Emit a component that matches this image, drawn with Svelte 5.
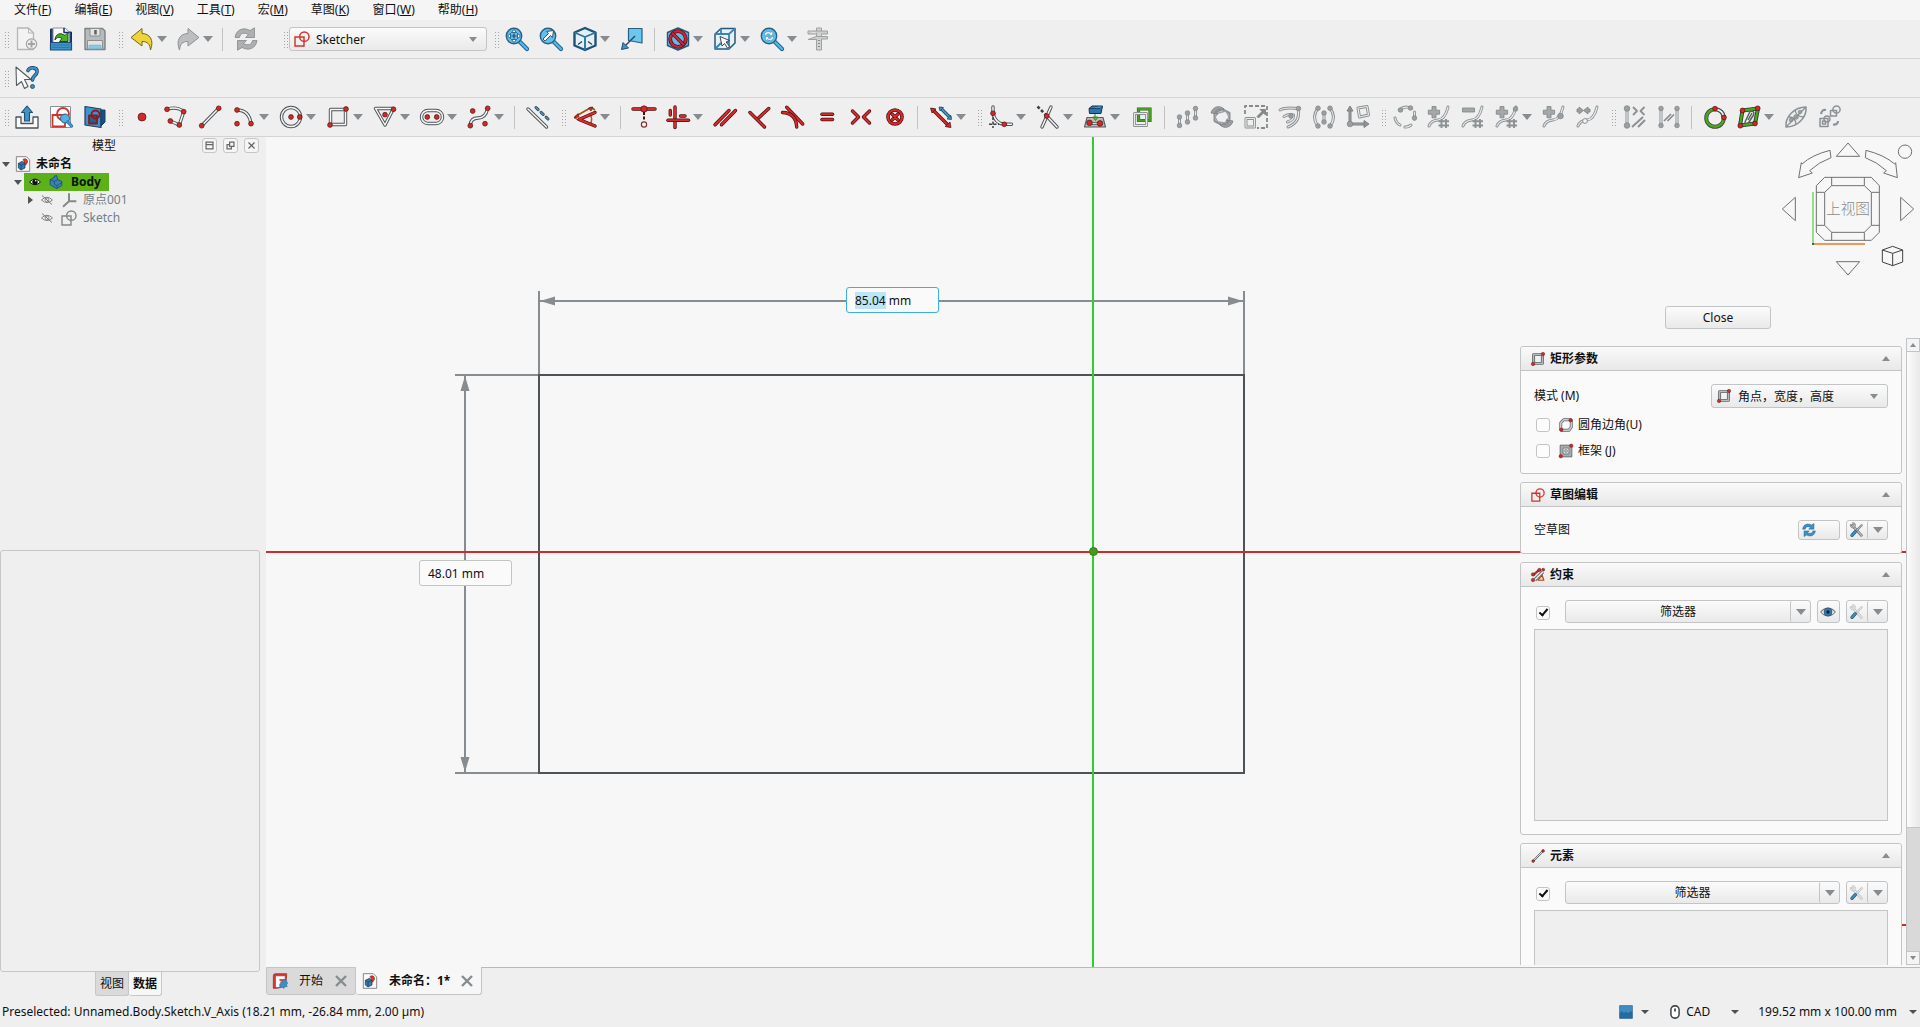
<script>
  const RED = '#cf2a2a';
  const dot = (x, y, r = 2.4) => `<circle cx="${x}" cy="${y}" r="${r}" fill="${RED}" stroke="#5a1010" stroke-width=".7"/>`;
  const gdot = (x, y, r = 2.3) => `<circle cx="${x}" cy="${y}" r="${r}" fill="#9a9fa2" stroke="#7d8386" stroke-width=".7"/>`;
  const line = (d, outer, ow, inner, iw, extra = '') =>
    `<path d="${d}" fill="none" stroke="${outer}" stroke-width="${ow}" stroke-linejoin="round" stroke-linecap="round" ${extra}/><path d="${d}" fill="none" stroke="${inner}" stroke-width="${iw}" stroke-linejoin="round" stroke-linecap="round" ${extra}/>`;
  const w = (d) => line(d, '#4b5358', 3.4, '#f6f6f6', 1.5);
  const g = (d) => line(d, '#8b9194', 3, '#e9e9e9', 1.2);
  const r = (d) => line(d, '#4a0c10', 3.4, '#d62b2b', 2);
  const thin = (d, c = '#4b5358', sw = 1.2, fill = 'none', extra = '') =>
    `<path d="${d}" fill="${fill}" stroke="${c}" stroke-width="${sw}" stroke-linejoin="round" ${extra}/>`;
  const lens = line('M14.5 14.5L22 22', '#1d5f8c', 4.2, '#54b8ec', 2.4) +
    `<circle cx="9" cy="9" r="7.7" fill="#5fc0ef" stroke="#2b5f80" stroke-width="1.4"/>`;
  const plus = thin('M5 1.5h4v3.700h3.600v4h-3.600v3.600h-4v-3.600h-3.700v-4h3.700z', '#7d8386', 0.8, '#a3a8aa');
  const hash = thin('M14.500 14v9M19 14v9M11.500 16.200h10.500M11.500 20.500h10.500', '#8b9194', 1.9);
  const curve = g('M2 21Q4 15.500 11 15T21 2');
  const refresh = (c, s) =>
    thin('M1 10.500C2 3 9 -.5 16 3.500L20.500 .8V10.500H11.500L14.500 7.500C10 5 6 6.500 5.500 10.500z', s, 0.8, c) +
    thin('M23 13.500C22 21 15 24.500 8 20.500L3.500 23.200V13.500H12.500L9.500 16.500C14 19 18 17.500 18.500 13.500z', s, 0.8, c);
  const sketch = (c, f = 'none') =>
    `<path d="M1.500 9h13.500v13.500h-13.500z" fill="${f}" stroke="${c}" stroke-width="2.200"/><circle cx="15.500" cy="8.500" r="7" fill="none" stroke="${c}" stroke-width="2.200"/>`;
  const tools = (a, b) =>
    line('M5 5L18.500 20', a, 4.2, b, 2.2) + line('M19 5L11 13', a, 3.2, b, 1.6) +
    thin('M2 3.500L5 6.500L7.500 4L5 1C9 .5 11 4 9 7L6.500 9C3 9 1 7 2 3.500z', a, 0.9, b) +
    line('M9.500 14.500L4.500 20', '#235c85', 5, '#3d8cc2', 3);

  const I = {
    new: thin('M2.500 1H13.500L18.500 6V22.500H2.500z', '#b4b6b7', 1.3, '#f3f3f3') + thin('M13.500 1V6H18.500', '#b4b6b7', 1) +
      `<circle cx="16.500" cy="17" r="5.200" fill="#eee" stroke="#a2a5a6" stroke-width="1.200"/>` + thin('M16.500 13.500V20.500M13 17H20', '#a2a5a6', 2),
    open: thin('M1.500 2H4V15H1.500zM20 5H22.500V15H20z', '#152c66', 1, '#20407c') + thin('M4 1H16L20.500 5V16H4z', '#8b9194', 1, '#fafafa') + thin('M15 1V5.500H20.500', '#152c66', 1.5) +
      thin('M6 13C6.500 7 11 5 16 8.500L19 5.500V14.500H10.500L13 11.500C10 9.500 8 10 6 13z', '#14501a', 1, '#4bb31e') +
      thin('M1.500 15.500H22.500V23H1.500z', '#1d4d74', 1.2, '#3f92c9') + thin('M3 18H21M3 20.500H21', '#2c75a6', 0.9),
    save: thin('M2 1.500H19.500L22 4V22.500H2z', '#7c8284', 1.4, '#b8bbbc') + thin('M7 1.500H17V9H7z', '#8a8f91', 1, '#e4e4e4') +
      thin('M12.500 3V7.500', '#5d6365', 2.5) + thin('M4.500 13.500H19.500V22H4.500z', '#8a8f91', 1, '#e4e4e4') + thin('M6 18.200H18V21.500H6z', '#85b7d6', 1, '#8fc5e4'),
    undo: thin('M1 10.500L12 1.500V6.500C19.500 6.500 24.500 13 20.500 23C20 17 17.500 14.500 12 14.500V19z', '#7a6410', 1, '#edd43a'),
    redo: thin('M23 10.500L12 1.500V6.500C4.500 6.500 -.5 13 3.500 23C4 17 6.500 14.500 12 14.500V19z', '#8c9193', 1, '#bcbfc0'),
    refresh: refresh('#adb0b1', '#85898b'),
    refreshBlue: refresh('#3f90c4', '#265a80'),
    sketcher: sketch('#d2342c'),
    sketchGrey: sketch('#84898b'),
    fit: lens + thin('M9 2.500L11.500 5.500H6.500zM9 15.500L11.500 12.500H6.500zM2.500 9L5.500 6.500V11.500zM15.500 9L12.500 6.500V11.500z', '#1e4a68', 0.8, '#fff') + thin('M9 6.500v5M6.500 9h5', '#1e4a68', 1.2),
    fitSel: lens + thin('M4 12L9.500 6.500L7.500 4.500L14.500 3.500L13.500 10.500L11.500 8.500L6 14z', '#33464f', 0.9, '#fff'),
    cube: thin('M12 1L22.500 5.500V18.500L12 23L1.500 18.500V5.500z', '#1f5278', 2.4, '#e6f1f7') + thin('M1.500 5.500L12 10L22.500 5.500M12 10V23', '#2f76a5', 1.9) + thin('M5 17.500L9 14.500M19 17.500L15 14.500', '#2f4a5c', 1.5),
    plane: thin('M8.500 1.500H22V16L8.500 13.500z', '#2c5d7d', 1.2, '#6bc6f0') + thin('M15 9L5 19', '#1f4a6c', 1.5) + thin('M1.500 22.500L3 15.500L8.500 21z', '#1d4f76', 1, '#3e91c8'),
    clip: thin('M12 1L22.500 5.500V18.500L12 23L1.500 18.500V5.500z', '#24587d', 1.4, '#5bbdee') + `<circle cx="12" cy="12" r="7.800" fill="none" stroke="#5a1016" stroke-width="3.800"/><circle cx="12" cy="12" r="7.800" fill="none" stroke="#cf2434" stroke-width="2.200"/>` + line('M6.500 6.500L17.500 17.500', '#5a1016', 3.600, '#cf2434', 2.2),
    selcube: thin('M2 7L8 1.500H22V16L16 22H2z', '#285878', 1.5, '#e4f1f8') + thin('M2 7H16L22 1.500M16 7V22M8 1.500V7M8 15.500H16M2 22L8 16', '#3784b5', 1.8) + thin('M7 9.500L16.500 13.500L13 15L16.500 19.500L14.500 21L11.500 16.500L9 19z', '#333', 0.9, '#fff'),
    zoomsync: lens + `<g transform="translate(4 4) scale(.42)">${refresh('#fff', '#1e5075')}</g>`,
    caliper: thin('M9.500 1H14.500V23H9.500z', '#9da0a1', 1, '#d4d4d4') + thin('M1 4H20.500V7H14.500M1 4V7H9.500M1 12.500L9.500 9.500H14.500L20.500 9.500V12H14.500M1 12.500H9.500', '#9da0a1', 1, '#cdcdcd') + thin('M12 13v1M12 16v1M12 19v1', '#888', 2),
    help: thin('M1 1L16 13.500H9.500L13 20.500L9.500 22.500L6.500 15.500L1.500 19.500z', '#555b5e', 1.1, '#fbfbfb') + line('M13 4.500C15 .5 22.500 1 22 6C21.500 10 17.500 9.500 17.500 14', '#203c58', 3.6, '#3c8fc9', 2.2) + `<circle cx="17.500" cy="20.500" r="2" fill="#3c8fc9" stroke="#203c58" stroke-width=".8"/>`,
    leave: thin('M1 12H6V18.500H18V12H23V23H1z', '#4b5358', 1.3, '#fafafa') + thin('M12 1L17.500 7.500H14.500V16H9.500V7.500H6.500z', '#1f4f73', 1.1, '#4391c5'),
    view: thin('M1.500 1.500H21.500V22.500H1.500z', '#8b9194', 1, '#fff') + `<path d="M3.500 10H16V21.500H3.500z" fill="none" stroke="#d2342c" stroke-width="1.800"/><circle cx="14" cy="9" r="6" fill="none" stroke="#d2342c" stroke-width="1.800"/><circle cx="16" cy="13.500" r="4.500" fill="#4fb3e6" stroke="#245f88"/>` + line('M19 17L22.500 21', '#1d5f8c', 3.2, '#3e9bd2', 2),
    section: thin('M2 1.500L18 4V22.500L2 20z', '#17405f', 1.2, '#3f93c9') + thin('M18 5H22V17L18 21z', '#17405f', 1, '#1c4f86') + thin('M6 10.500H14V18.500H6z', '#8a1a20', 1.8, '#2a5f8c') + `<circle cx="12.500" cy="9.500" r="4" fill="none" stroke="#8a1a20" stroke-width="1.800"/>`,
    point: dot(12, 12, 4),
    polyline: w('M3 4.300Q13 1 19.700 6.700L15.300 20L6.300 16') + dot(3, 4.3) + dot(19.7, 6.7) + dot(15.3, 20) + dot(6.3, 16),
    line: w('M3.700 20.700L20.700 3.300') + dot(3.7, 20.7) + dot(20.7, 3.3),
    arc: w('M5 5Q17 5 19 18.700') + dot(5, 5) + dot(19, 18.7) + dot(5, 18.7),
    circle: w('M2.500 12a9.500 9.500 0 1 0 19 0a9.500 9.500 0 1 0 -19 0') + dot(12, 12) + dot(20.7, 12),
    rect: w('M4.500 4.500H19.500V19.500H4.500z') + dot(4, 20) + dot(20, 4),
    rectSmall: line('M4.500 4.500H19.500V19.500H4.500z', '#5d6568', 5, '#b9bec0', 2) + dot(3.5, 20.5, 3) + dot(20.5, 3.5, 3),
    rectRound: line('M8 3H19.500Q21 3 21 5V16L17 21H5Q3 21 3 19V8z', '#5d6568', 5, '#c9cccd', 2.6) + dot(4, 20, 3) + dot(20, 4, 3),
    rectFrame: thin('M2 2H22V22H2z', '#5d6568', 1.5, '#a9adaf') + thin('M7 7H17V17H7z', '#5d6568', 1.3, '#f2f2f2') + thin('M10 10H14V14H10z', '#5d6568', 1.3) + dot(3, 21, 3) + dot(21, 3, 3),
    polygon: w('M2.500 3.500H20.500L12 20z') + dot(20.5, 4.3) + dot(12, 9.7),
    slot: w('M8 5.500H16A6.500 6.500 0 0 1 16 18.500H8A6.500 6.500 0 0 1 8 5.500z') + dot(7.3, 12) + dot(16.7, 12),
    bspline: w('M3.300 20.700Q3.500 13 11 13T20.700 3.300') + dot(5.7, 6) + dot(20.7, 3.3) + dot(3.3, 20.7) + dot(18, 18.7),
    construct: w('M2 4L20.500 22') + line('M10 2.500L22 14', '#39464e', 3, '#4d8cb5', 1.6, 'stroke-dasharray="3 4"'),
    angle: thin('M1.500 12L18 2.500L22 5', '#a8500c', 1.6) + thin('M1.500 12.500L5 15M17 9Q20 14 17.500 19', '#c4521b', 1.5) + r('M22 7.500L6 14.500L22 21') + thin('M1 13L5 8.500L6 12zM20 2L15.500 3L18 6z', '#5a1010', 0.6, RED),
    coincident: r('M1 4H23') + dot(12, 4, 3.2) + thin('M12 7V16', '#4a1010', 2, 'none', 'stroke-dasharray="3 1.500"') + `<circle cx="12" cy="19.500" r="2.600" fill="#fff" stroke="#8a2a2a" stroke-width="1.200"/>`,
    horver: r('M9 2V22.500') + r('M2 15.300H22.500') + r('M4.300 5.500V10') + r('M14.500 11H19'),
    parallel: r('M2 19.700L16 5.500') + r('M8.500 19.700L22.500 5.500'),
    perp: r('M21.700 3.500L10.500 14') + r('M3 7.500L17.500 22'),
    tangent: r('M5.700 2.300L21.700 19') + r('M1.500 7.500Q15 8 15.700 22'),
    equal: r('M7 9.300H17.500') + r('M7 14.500H17.500'),
    symm: r('M3.500 6L9.500 12L3.500 18') + r('M20.500 6L14.500 12L20.500 18'),
    block: `<circle cx="12" cy="12" r="7" fill="none" stroke="#4a0c10" stroke-width="3.600"/><circle cx="12" cy="12" r="7" fill="none" stroke="#d62b2b" stroke-width="2.200"/>` + r('M9 9L15 15M15 9L9 15'),
    toggle: r('M4 5L19.500 20.500') + thin('M1.500 3L7 4L3 8zM22 22.500L16 21.500L21 17z', '#4a0c10', 0.7, RED) + line('M12 3.500L21 12.500', '#1f3f58', 3.2, '#4593c2', 1.8) + thin('M10 2L14.500 2.500L11 6zM22.500 14.500L18 14L21.500 10z', '#1f3f58', 0.7, '#4593c2'),
    fillet: w('M4 2V8.300Q6 18 15.300 19.300H22.500') + thin('M4 12V23M0 19.300H10', '#3b4246', 1.5, 'none', 'stroke-dasharray="3 1.500"') + dot(4, 8.3) + dot(15.3, 19.3),
    trim: w('M15 2L6 22') + w('M10.700 11L21 22') + thin('M1.500 1.500L10 10', '#3b4246', 2.6, 'none', 'stroke-dasharray="3 2"') + dot(10.7, 11),
    external: thin('M4 12.500H20L22.500 22H1.500z', '#555b5e', 1.1, '#b9bcbd') + thin('M6 3.500L9 1H19.500L18 8.500H6.500z', '#12324e', 1, '#2d74ac') + thin('M6 3.500H17L19.500 1', '#12324e', 0.8, '#4e9bd0') + thin('M12 9V13M10 12H15L12.500 15.500z', '#2f8a1c', 1, '#54c030') + line('M6.500 18.500H17', '#555', 2.5, '#ddd', 1) + dot(6.5, 17.8, 2.8) + dot(17, 18.4, 2.8),
    carbon: `<path d="M8.500 4H20V15.500H8.500z" fill="none" stroke="#2c6c14" stroke-width="3.200"/><path d="M8.500 4H20V15.500H8.500z" fill="none" stroke="#459f22" stroke-width="2"/>` + g('M4.500 8.500H16.500V20.500H4.500z'),
    g1: g('M3.500 12V20.500') + g('M11.500 8V17') + g('M19.500 3V13') + gdot(3.5, 12) + gdot(3.5, 20.5) + gdot(11.5, 8) + gdot(11.5, 17) + gdot(19.5, 3.5) + gdot(19.5, 13),
    g2: thin('M12 4L19.500 8V16L12 20L4.500 16V8z', '#8b9194', 2) + thin('M8 8L16 6L19 12L15 18L8 17L5 12z', '#9ca1a3', 1.3) + thin('M1 8C3 1 10 0 14 4L11 5C8 3.500 6 5 5.500 7.500L8 9zM23 16C21 23 14 24 10 20L13 19C16 20.500 18 19 18.500 16.500L16 15z', '#777d80', 0.8, '#9a9fa2'),
    g3: thin('M1 9V1H23V23H13', '#84898c', 1.8, 'none', 'stroke-dasharray="4 2"') + g('M2 13.500H10.500V22H2z') + thin('M13 11.500L18 6.500L16 4.500H21.500V10L19.500 8L14.500 13z', '#6f7578', 0.7, '#84898c'),
    g4: g('M2 5Q7 2 20 3.500Q23 17 10 22') + g('M6 11.500Q11 8.500 15.500 10Q16 15 9.500 17') + gdot(20.5, 3.5) + gdot(13, 11),
    g5: g('M6 3Q-1 12 6 21.500') + g('M18 3Q25 12 18 21.500') + g('M12 7.500V16.500') + gdot(6, 3.2) + gdot(6, 21) + gdot(18, 3.2) + gdot(18, 21) + gdot(12, 8) + gdot(12, 17),
    g6: line('M4 5V19H19', '#7d8386', 3, '#8f9597', 1.8) + thin('M4 1L7 6H1zM23 19L18 22.500V15.500z', '#7d8386', 1, '#8f9597') + gdot(4, 19, 2.8) + g('M12 3L21 1.500L22.500 10L13.500 12z'),
    g7: g('M6.500 5Q12 0 18 3.500') + g('M21.500 7V14') + g('M18 20Q15 22.500 12 22') + g('M7 20Q3 18 2 13') + gdot(7.500, 5) + gdot(17.5, 3) + gdot(21.500, 13),
    g8: curve + hash + plus,
    g9: curve + hash + thin('M1.500 3H13.500V7H1.500z', '#7d8386', 0.8, '#a3a8aa'),
    g10: curve + hash + plus + gdot(20.500, 4),
    g11: curve + plus + gdot(18.5, 11, 2.8),
    g12: curve + thin('M1 4H3V2L7.500 5.500L3 9V7H1zM14 4H12V2L7.500 5.500L12 9V7H14z', '#7d8386', 0.8, '#9a9fa2') + `<circle cx="9" cy="16" r="2.400" fill="#f5f5f5" stroke="#8b9194"/>`,
    g13: g('M4 4V20') + gdot(4, 3.500, 2.800) + gdot(4, 20.500, 2.8) + thin('M10 2L14 6L10 10M21.500 2L17.500 6L21.500 10', '#8b9194', 1.8) + thin('M9 22L20 12M15 22L22 15', '#8b9194', 2),
    g14: g('M4 4V20') + g('M20 4V20') + gdot(4, 3.5) + gdot(4, 20.5) + gdot(20, 3.5) + gdot(20, 20.5) + thin('M7 16L14 9M10.500 16L17 9.500', '#84898c', 1.6),
    closed: `<circle cx="12" cy="13" r="8.800" fill="none" stroke="#3e4a42" stroke-width="4"/><circle cx="12" cy="13" r="8.800" fill="none" stroke="#4aa81f" stroke-width="2.400"/>` + w('M13 4.200Q20 5.500 20.800 12') + dot(12, 3.7) + dot(21, 12.5),
    validate: line('M5.500 5.500L21 3.500L18 18.500L3 20.500z', '#2a3a2a', 4, '#4aa81f', 2.3, '') + thin('M8 17L13 6.500Q18 5 16.500 10L12 17Q8 20 8 17M11 15L15 8', '#5a6062', 1.5, '#f2f2f2') + dot(5.5, 5.5) + dot(20.7, 3.3) + dot(18, 18.5) + dot(3.3, 20.7),
    g15: thin('M2 22C1 12 10 2 22 2C23 12 14 22 2 22z', '#8b9194', 1.5, '#ececec') + thin('M2 22L22 2M5 12Q12 12 12 20M11 5Q12 12 20 12', '#8b9194', 1.3) + gdot(12, 12) + gdot(7, 15, 1.800) + gdot(16, 7, 1.800),
    g16: thin('M12.500 5.500H18.500V11H12.500zM2 13.500H10V21.500H2zM4.500 16H7.500V19H4.500z', '#8b9194', 1.5) + `<circle cx="18.500" cy="4.500" r="3.600" fill="none" stroke="#8b9194" stroke-width="1.500"/><circle cx="9" cy="14" r="3" fill="none" stroke="#8b9194" stroke-width="1.300"/>` + thin('M3 9Q4 4 8 5M20 16Q20 20 15 19.500', '#8b9194', 2.2),
    doc: thin('M2 1H17L22 6V23H2z', '#777', 1.3, '#fafafa') + thin('M5 11L11 8L15 11V18L9 21L5 18z', '#12324e', 1, '#3679ad') + thin('M12 5Q18 2 19 9L16 14L14 9z', '#7a1414', 0.8, '#d93a2b') + thin('M5 11L9 13.500L15 11M9 13.500V21', '#12324e', 0.9),
    body: thin('M2 8L8 5L9 2L13 1L15 8L22 11V18L13 23L2 17z', '#17466b', 1.4, '#3a83b9') + thin('M2 8L9 11L15 8M9 11V16L14 18L22 13M14 18V23', '#17466b', 1.2),
    origin: thin('M12 2V14L3 22M12 14H23', '#84898b', 3),
    eye: thin('M1 12Q12 0 23 12Q12 23 1 12z', '#111', 2, '#fff') + `<circle cx="12" cy="12" r="5.500" fill="#111"/><circle cx="13.500" cy="9.500" r="1.600" fill="#fff"/>`,
    eyeOff: thin('M1 12Q12 1 23 12Q12 22 1 12z', '#777', 1.8, '#f4f4f4') + `<circle cx="12" cy="12" r="4" fill="none" stroke="#777" stroke-width="1.600"/>` + thin('M2 3L22 21', '#777', 2),
    eyeBlue: thin('M1 12Q12 0 23 12Q12 24 1 12z', '#6d7375', 1.6, '#eef3f6') + `<circle cx="12" cy="12" r="6" fill="#2f7fb5" stroke="#1f4f73"/><circle cx="12" cy="12" r="2.500" fill="#101820"/>`,
    tools: tools('#6b7073', '#b4b8b9'),
    toolsOff: tools('#b9bcbd', '#e4e4e4'),
    constraints: r('M4 12L14 3') + dot(14.500, 3.500, 3) + dot(3.500, 20.500, 3) + dot(21, 3, 2.500) + dot(3.500, 11, 3) + thin('M4 20L20 4M8 22L22 8', '#6b7073', 2) + thin('M12 21H22L19 12z', '#b5471a', 2, '#e9d9b0'),
    logo: thin('M2 23V4Q2 1 5 1H22V4L20 20L8 23z', '#9d1f1f', 1, '#d8352e') + thin('M6 21V5H19V9H11V12H15V16H11V21z', '#d9e1e6', 0.6, '#fff') + thin('M13 13L16 12L17 9.500L19.500 11L22 10V13L24 15L22 17.500L23 20.500L20 20.500L17.500 23.500L16 21L12 22V18z', '#2c6c9b', 0.6, '#3f8cc4'),
    nav: thin('M1 1H23V23H1z', '#1f5279', 1, '#3f8cc0') + thin('M2 14L5 11L8 15L12 12L16 15L20 11L22 13V22H2z', '#1f5f96', 1, '#256aa3'),
    mouse: `<rect x="5" y="1.500" width="14" height="21" rx="6.500" fill="#fff" stroke="#3f4649" stroke-width="2.600"/>` + thin('M12 6V11', '#3f4649', 3)
  };

  const b = (icon, label) => ({ icon, label });
  const m = (icon, label) => ({ icon, label, menu: true });
  const H = { handle: true };
  const S = { sep: true };

  const fileBar = [H, b('new', '新建'), b('open', '打开'), b('save', '保存'), H, m('undo', '撤销'), m('redo', '重做'), S, b('refresh', '刷新')];
  const viewBar = [H, b('fit', '显示全部'), b('fitSel', '显示选中'), m('cube', '等轴测'), b('plane', '对齐视图'), S, m('clip', '剖切'), m('selcube', '选择'), m('zoomsync', '同步视图'), b('caliper', '测量')];
  const sketchBar = [
    H, b('leave', '离开草图'), b('view', '查看草图'), b('section', '查看剖面'), H,
    b('point', '点'), b('polyline', '折线'), b('line', '直线'), m('arc', '圆弧'), m('circle', '圆'), m('rect', '矩形'), m('polygon', '多边形'), m('slot', '槽'), m('bspline', 'B样条'), S, b('construct', '构造几何'), H,
    m('angle', '尺寸约束'), S, b('coincident', '重合'), m('horver', '水平/垂直'), b('parallel', '平行'), b('perp', '垂直'), b('tangent', '相切'), b('equal', '相等'), b('symm', '对称'), b('block', '锁定'), S, m('toggle', '切换约束'), H,
    m('fillet', '圆角'), m('trim', '修剪'), m('external', '外部几何'), b('carbon', '复写'), S, b('g1', '移动'), b('g2', '旋转'), b('g3', '缩放'), b('g4', '偏移'), b('g5', '镜像'), b('g6', '移除对齐'), H,
    b('g7', '转换B样条'), b('g8', '升阶'), b('g9', '降阶'), m('g10', '重数'), b('g11', '插入节点'), b('g12', '连接曲线'), H,
    b('g13', '选择约束'), b('g14', '选择元素'), S, b('closed', '显示轮廓'), m('validate', '验证'), b('g15', '对称几何'), b('g16', '切换空间')
  ];
  const menus = [['文件', 'F'], ['编辑', 'E'], ['视图', 'V'], ['工具', 'T'], ['宏', 'M'], ['草图', 'K'], ['窗口', 'W'], ['帮助', 'H']];
</script>

{#snippet icon(name, cls = '')}
  <svg class="ico {cls}" viewBox="0 0 24 24" aria-hidden="true">{@html I[name]}</svg>
{/snippet}

{#snippet bar(items)}
  {#each items as it}
    {#if it.handle}
      <span class="handle"></span>
    {:else if it.sep}
      <span class="sep"></span>
    {:else}
      <button class="tool" class:menu={it.menu} aria-label={it.label}>
        {@render icon(it.icon)}
        {#if it.menu}<span class="tri"></span>{/if}
      </button>
    {/if}
  {/each}
{/snippet}

{#snippet head(name, title)}
  <header class="phead">
    {@render icon(name, 'i14')}
    <h2>{title}</h2>
    <button class="fold" aria-label="折叠"></button>
  </header>
{/snippet}

{#snippet split(name)}
  <div class="split">
    <button aria-label="设置">{@render icon(name, 'i16')}</button>
    <button class="drop" aria-label="更多"><span class="tri"></span></button>
  </div>
{/snippet}

<div class="app">
  <nav class="menubar">
    {#each menus as [name, key]}
      <button>{name}(<u>{key}</u>)</button>
    {/each}
  </nav>

  <div class="toolbar">
    <div class="group file">{@render bar(fileBar)}</div>
    <div class="group"><span class="handle"></span>
      <label class="workbench">
        {@render icon('sketcher', 'i16')}
        <select aria-label="工作台"><option>Sketcher</option></select>
        <span class="tri small"></span>
      </label>
    </div>
    <div class="group viewgroup">{@render bar(viewBar)}</div>
  </div>
  <div class="toolbar">
    <div class="group">{@render bar([H, b('help', '这是什么')])}</div>
  </div>
  <div class="toolbar">
    <div class="group">{@render bar(sketchBar)}</div>
  </div>

  <main>
    <aside>
      <header class="docktitle">
        <h1>模型</h1>
        <button aria-label="最小化"><svg viewBox="0 0 15 15"><path d="M3.500 3.500h8v8h-8zM3.500 6.500h8" /></svg></button>
        <button aria-label="浮动"><svg viewBox="0 0 15 15"><path d="M6.500 3.500h5v5h-5zM6.500 6.500h-3v5h5v-3" /></svg></button>
        <button aria-label="关闭"><svg viewBox="0 0 15 15"><path d="M4 4l7 7M11 4l-7 7" /></svg></button>
      </header>
      <ul class="tree">
        <li class="l0"><span class="exp"></span>{@render icon('doc', 'i16')}<b>未命名</b></li>
        <li class="l1"><span class="exp"></span><span class="hit">{@render icon('eye', 'i12')}{@render icon('body', 'i14')}<b>Body</b></span></li>
        <li class="l2 dim"><span class="exp shut"></span>{@render icon('eyeOff', 'i12')}{@render icon('origin', 'i16')}<span>原点001</span></li>
        <li class="l2 dim"><span class="exp none"></span>{@render icon('eyeOff', 'i12')}{@render icon('sketchGrey', 'i16')}<span>Sketch</span></li>
      </ul>
      <div class="props"></div>
      <div class="sidetabs">
        <button>视图</button>
        <button class="on">数据</button>
      </div>
    </aside>

    <section class="work">
      <div class="view">
        <svg class="canvas" aria-hidden="true">
          <path class="dim" d="M273 154V237M978 154V237M274 164H977M189 238H273M189 636H273M199 239V635" />
          <path class="tip" d="M274 164l15 -4.500v9zM977 164l-15 -4.500v9zM199 239l-4.500 15h9zM199 635l-4.500 -15h9z" />
          <path class="shape" d="M273 238H978V636H273z" />
          <line class="xaxis" x1="0" y1="415" x2="100%" y2="415" />
          <line class="xaxis" x1="98%" y1="788" x2="100%" y2="788" />
          <line class="yaxis" x1="827" y1="0" x2="827" y2="100%" />
          <circle cx="827.500" cy="414.500" r="4" />
        </svg>
        <label class="dimfield width focus">
          <span class="value"><mark>85.04</mark> mm</span>
          <input aria-label="宽度" />
        </label>
        <label class="dimfield height">
          <span class="value">48.01 mm</span>
          <input aria-label="高度" />
        </label>

        <svg class="navcube" viewBox="840 21 420 420" aria-hidden="true">
          <path d="M1044 39l35 40h-70zM1044 435l35 -40h-70zM847 237l39 -35v70zM1241 237l-39 -35v70z" />
          <path d="M990 61Q935 75 906 102L904 98L896 143L937 129L929 122Q955 97 993 83zM1098 61Q1153 75 1184 102L1187 98L1192 143L1151 129L1159 122Q1133 97 1096 83z" />
          <circle cx="1215" cy="65" r="20" />
          <path d="M974 142H1114L1138 167V307L1114 331H974L949 307V167zM995 142V167H1093V142M995 331V307H1093V331M949 187H974V286H949M1138 187H1114V286H1138M995 167L974 187M1093 167L1114 187M974 286L995 307M1114 286L1093 307" />
          <path class="cubelet" d="M1147 360L1178 349L1208 360V396L1178 407L1147 396zM1147 360L1178 370L1208 360M1178 370V407" />
          <path class="ay" d="M939 186V341" />
          <path class="ax" d="M939 342H1095" />
          <path class="az" d="M936 342H942" />
          <text x="1044" y="253" text-anchor="middle">上视图</text>
        </svg>

        <div class="task">
          <div class="closerow"><button class="btn close">Close</button></div>
          <div class="scroller">
            <div class="panels">
              <section class="panel">
                {@render head('rectSmall', '矩形参数')}
                <div class="pbody form">
                  <div class="row">
                    <label for="mode">模式 (M)</label>
                    <div class="combo">
                      {@render icon('rectSmall', 'i14')}
                      <select id="mode"><option>角点，宽度，高度</option></select>
                      <span class="tri small"></span>
                    </div>
                  </div>
                  <label class="check"><input type="checkbox" />{@render icon('rectRound', 'i14')}圆角边角(U)</label>
                  <label class="check"><input type="checkbox" />{@render icon('rectFrame', 'i14')}框架 (J)</label>
                </div>
              </section>

              <section class="panel">
                {@render head('sketcher', '草图编辑')}
                <div class="pbody">
                  <div class="row low">
                    <span class="grow">空草图</span>
                    <button class="btn update" aria-label="更新">{@render icon('refreshBlue', 'i14')}</button>
                    {@render split('tools')}
                  </div>
                </div>
              </section>

              <section class="panel">
                {@render head('constraints', '约束')}
                <div class="pbody">
                  <div class="row">
                    <input class="tick" type="checkbox" checked aria-label="启用约束筛选" />
                    <div class="split filter"><button>筛选器</button><button class="drop" aria-label="筛选选项"><span class="tri"></span></button></div>
                    <button class="btn sq" aria-label="显示">{@render icon('eyeBlue', 'i16')}</button>
                    {@render split('toolsOff')}
                  </div>
                  <div class="list"></div>
                </div>
              </section>

              <section class="panel">
                {@render head('line', '元素')}
                <div class="pbody">
                  <div class="row">
                    <input class="tick" type="checkbox" checked aria-label="启用元素筛选" />
                    <div class="split filter"><button>筛选器</button><button class="drop" aria-label="筛选选项"><span class="tri"></span></button></div>
                    {@render split('toolsOff')}
                  </div>
                  <div class="list"></div>
                </div>
              </section>
            </div>
            <div class="scrollbar">
              <button class="up" aria-label="向上"></button>
              <span class="thumb"></span>
              <span class="track"></span>
              <button class="down" aria-label="向下"></button>
            </div>
          </div>
        </div>
      </div>

      <div class="doctabs">
        <div class="tab">{@render icon('logo', 'i16')}<span>开始</span><button aria-label="关闭标签"><svg viewBox="0 0 12 12"><path d="M1 1l10 10M11 1L1 11" /></svg></button></div>
        <div class="tab on">{@render icon('doc', 'i16')}<span>未命名：1*</span><button aria-label="关闭标签"><svg viewBox="0 0 12 12"><path d="M1 1l10 10M11 1L1 11" /></svg></button></div>
        <div class="rest"></div>
      </div>
    </section>
  </main>

  <footer>
    <span class="grow">Preselected: Unnamed.Body.Sketch.V_Axis (18.21 mm, -26.84 mm, 2.00 µm)</span>
    <button class="stat" aria-label="通知">{@render icon('nav', 'i14')}<span class="tri dark"></span></button>
    <button class="stat cad">{@render icon('mouse', 'i14')}CAD<span class="tri dark"></span></button>
    <button class="stat">199.52 mm x 100.00 mm<span class="tri dark"></span></button>
  </footer>
</div>

<style>
  :global(body) { margin: 0; background: #efefef; }
  .app {
    display: flex;
    flex-direction: column;
    height: 100vh;
    overflow: hidden;
    font: 12px/16px "Noto Sans", "Noto Sans CJK SC", sans-serif;
    color: #101010;
    background: #efefef;
  }
  button, select, input { font: inherit; color: inherit; margin: 0; }
  button { border: 0; padding: 0; background: none; }
  h1, h2 { margin: 0; font: inherit; }
  .ico { display: block; width: 24px; height: 24px; flex: none; overflow: visible; }
  .i16 { width: 16px; height: 16px; }
  .i14 { width: 14px; height: 14px; }
  .i12 { width: 12px; height: 12px; }
  .grow { flex: 1; }

  .tri {
    flex: none;
    width: 0;
    border: 5px solid transparent;
    border-top: 6px solid #868c8f;
    border-bottom: 0;
  }
  .tri.small { border-width: 5px 4px 0; }
  .tri.dark { border-width: 4px 4px 0; border-top-color: #4b5053; }

  .menubar { display: flex; height: 20px; background: #f5f5f5; padding-left: 3px; flex: none; }
  .menubar button { padding: 0 12px 0 11px; line-height: 20px; }

  .toolbar { display: flex; height: 38px; border-bottom: 1px solid #d4d4d4; flex: none; align-items: center; }
  .group { display: flex; align-items: center; height: 38px; }
  .handle {
    width: 6px;
    height: 17px;
    margin: 0 1px 0 6px;
    background: radial-gradient(circle, #a5a5a5 1px, transparent 1px) 0 0 / 3px 3px;
  }
  .handle:first-child { margin: 0 1px 0 4px; width: 5px; }
  .sep { width: 1px; height: 23px; margin: 0 6px 0 5px; background: #c2c2c2; }
  .tool { display: flex; align-items: center; width: 34px; height: 34px; padding-left: 5px; }
  .tool.menu { width: 47px; gap: 3px; }
  .file .tool.menu { width: 46px; }
  .file { padding-right: 16px; }
  .viewgroup { margin-left: 3px; }
  .workbench, .combo {
    display: flex;
    align-items: center;
    box-sizing: border-box;
    border: 1px solid #c3c4c5;
    border-radius: 3px;
    background: linear-gradient(#fbfbfb, #e9e9e9);
  }
  .workbench { width: 198px; height: 24px; padding: 0 9px 0 4px; gap: 6px; }
  select { flex: 1; min-width: 0; appearance: none; border: 0; background: none; padding: 1px 0 0; outline: 0; }

  main { display: flex; flex: 1; min-height: 0; }
  aside { display: flex; flex-direction: column; width: 266px; flex: none; }
  .docktitle { display: flex; align-items: center; height: 17px; padding: 0 7px 0 12px; gap: 6px; }
  .docktitle h1 { flex: 1; text-align: center; }
  .docktitle button { width: 15px; height: 15px; box-sizing: border-box; border: 1px solid #c6c6c6; border-radius: 3px; background: #f5f5f5; }
  .docktitle svg { display: block; width: 13px; height: 13px; fill: none; stroke: #666; stroke-width: 1.4; }
  .tree { list-style: none; margin: 0; padding: 1px 0 0; flex: 397; }
  .tree li { display: flex; align-items: center; height: 18px; gap: 6px; }
  .tree b { line-height: 18px; }
  .l0 { padding-left: 2px; }
  .tree .l0 { gap: 5px; }
  .l1 { padding-left: 14px; }
  .tree .l1 { gap: 2px; }
  .l2 { padding-left: 26px; }
  .dim { color: #708085; }
  .exp { width: 0; border: 4px solid transparent; border-top: 5px solid #4f5457; border-bottom: 0; }
  .exp.shut { border: 4px solid transparent; border-left: 5px solid #4f5457; border-right: 0; margin: 0 1px 0 2px; }
  .exp.none { visibility: hidden; }
  .l2 .i12 { margin: 0 2px 0 1px; }
  .hit { display: flex; align-items: center; gap: 8px; height: 18px; padding: 0 8px 0 5px; background: #5bb117; color: #101010; }
  .props { flex: 423; box-sizing: border-box; width: 260px; border: 1px solid #c6c6c6; border-radius: 3px; }
  .sidetabs { display: flex; margin-left: 95px; height: 28px; align-items: flex-start; }
  .sidetabs button { height: 24px; padding: 0 4px; border: 1px solid #c6c6c6; border-top: 0; border-radius: 0 0 3px 3px; background: #dadada; }
  .sidetabs .on { background: #f7f7f7; font-weight: bold; border-left: 0; }

  .work { flex: 1; min-width: 0; display: flex; flex-direction: column; }
  .view { position: relative; flex: 1; min-height: 0; background: #f7f7f7; overflow: hidden; }
  .canvas { position: absolute; inset: 0; width: 100%; height: 100%; }
  .canvas .dim { fill: none; stroke: #878c90; stroke-width: 2; }
  .canvas .tip { fill: #878c90; }
  .canvas .shape { fill: none; stroke: #4d5357; stroke-width: 2; }
  .xaxis { stroke: #cc2c2c; stroke-width: 2; }
  .yaxis { stroke: #33cc33; stroke-width: 2; }
  .canvas circle { fill: #459a1d; stroke: #387f18; }
  .dimfield { position: absolute; box-sizing: border-box; width: 93px; height: 26px; border: 1px solid #c3c4c5; border-radius: 3px; background: #fafafa; display: grid; align-items: center; }
  .dimfield.focus { border-color: #3daee2; }
  .dimfield.width { left: 580px; top: 150px; }
  .dimfield.height { left: 153px; top: 423px; }
  .dimfield .value, .dimfield input { grid-area: 1 / 1; }
  .dimfield .value { padding: 2px 0 0 8px; }
  .dimfield input { width: 100%; height: 100%; box-sizing: border-box; border: 0; background: transparent; outline: 0; }
  mark { background: #bbe6f8; color: inherit; }
  .navcube { position: absolute; top: 0; right: 0; width: 140px; height: 140px; fill: none; stroke: #707070; stroke-width: 3; }
  .navcube .cubelet { stroke: #404040; }
  .navcube .ay { stroke: #93dd8f; stroke-width: 6; }
  .navcube .ax { stroke: #e8995c; stroke-width: 6; }
  .navcube .az { stroke: #2a5fa0; stroke-width: 6; }
  .navcube text { fill: #8b8b8b; stroke: none; font-size: 44px; font-family: "Noto Sans CJK SC", sans-serif; font-weight: 300; }

  .task { position: absolute; top: 169px; right: 0; bottom: 2px; width: 400px; display: flex; flex-direction: column; }
  .closerow { display: flex; justify-content: center; height: 32px; padding-right: 4px; align-items: flex-start; }
  .btn { border: 1px solid #c3c4c5; border-radius: 3px; background: linear-gradient(#fbfbfb, #e9e9e9); box-sizing: border-box; }
  .close { width: 106px; height: 23px; }
  .scroller { display: flex; flex: 1; min-height: 0; gap: 4px; }
  .panels { flex: 1; padding-top: 8px; overflow: hidden; display: flex; flex-direction: column; gap: 8px; }
  .panel { border: 1px solid #c3c4c5; border-radius: 3px; background: #fafafa; flex: none; }
  .phead { display: flex; align-items: center; gap: 5px; height: 23px; padding: 0 11px 0 10px; border-bottom: 1px solid #c3c4c5; background: linear-gradient(#fafafa, #e8e8e8); border-radius: 3px 3px 0 0; }
  .phead h2 { flex: 1; font-weight: bold; }
  .fold { width: 0; border: 4px solid transparent; border-bottom: 5px solid #868c8f; border-top: 0; }
  .pbody { padding: 13px 13px; }
  .form { padding-bottom: 9px; }
  .row { display: flex; align-items: center; gap: 6px; height: 23px; }
  .row.low { height: 20px; }
  .form .row { justify-content: space-between; height: 24px; margin-bottom: 4px; }
  .combo { width: 177px; height: 24px; padding: 0 9px 0 5px; gap: 7px; }
  .check { display: flex; align-items: center; gap: 5px; height: 26px; padding-left: 2px; }
  .check .ico { margin-left: 4px; }
  input[type="checkbox"] { appearance: none; width: 14px; height: 14px; box-sizing: border-box; border: 1px solid #c3c4c5; border-radius: 3px; background: #fdfdfd; flex: none; display: grid; place-items: center; }
  input[type="checkbox"]:checked::before { content: ""; width: 3px; height: 7px; border: solid #111; border-width: 0 2px 2px 0; transform: rotate(40deg); margin-bottom: 2px; }
  .tick { margin: 2px 9px 0 2px; }
  .update { width: 42px; height: 20px; padding-left: 3px; }
  .sq { width: 23px; height: 23px; padding-left: 2px; }
  .split { display: flex; align-self: stretch; box-sizing: border-box; width: 42px; border: 1px solid #c3c4c5; border-radius: 3px; background: linear-gradient(#fbfbfb, #e9e9e9); }
  .split button { flex: 1; display: grid; place-items: center; }
  .split .drop { flex: none; width: 20px; border-left: 1px solid #c3c4c5; border-radius: 2px; }
  .split .tri { border-width: 6px 5px 0; }
  .filter { flex: 1; width: auto; }
  .list { height: 190px; margin-top: 6px; border: 1px solid #c3c4c5; background: #efefef; }

  .scrollbar { width: 14px; display: flex; flex-direction: column; background: #d9d9d9; border-left: 1px solid #c3c4c5; box-sizing: border-box; }
  .scrollbar button { height: 14px; flex: none; border: 1px solid #c3c4c5; border-left: 0; background: #f4f4f4; display: grid; place-items: center; box-sizing: border-box; }
  .up::before { content: ""; border: 3px solid transparent; border-bottom: 4px solid #868c8f; border-top: 0; }
  .down::before { content: ""; border: 3px solid transparent; border-top: 4px solid #868c8f; border-bottom: 0; }
  .thumb { flex: 476; background: linear-gradient(90deg, #fbfbfb, #e9e9e9); border-bottom: 1px solid #c3c4c5; }
  .track { flex: 123; }

  .doctabs { display: flex; height: 33px; align-items: flex-start; }
  .tab { display: flex; align-items: center; box-sizing: border-box; width: 90px; height: 28px; padding: 0 8px 0 5px; gap: 9px; border: 1px solid #c3c4c5; border-radius: 0 0 3px 3px; background: #dadada; }
  .tab .ico { margin-right: 2px; }
  .tab span { flex: 1; white-space: nowrap; }
  .tab.on { width: 126px; padding-left: 6px; border-top: 0; border-left: 0; background: #f7f7f7; font-weight: bold; }
  .tab svg:not(.ico) { display: block; width: 12px; height: 12px; stroke: #868c8f; stroke-width: 2.4; fill: none; }
  .rest { flex: 1; border-top: 1px solid #b9b9b9; }

  footer { display: flex; align-items: center; height: 27px; padding: 0 3px 3px 2px; box-sizing: border-box; flex: none; }
  .stat { display: flex; align-items: center; gap: 7px; margin-left: 19px; }
  .stat .tri { margin-left: 1px; }
  .cad { gap: 4px; }
  .cad .tri { margin-left: 17px; }
  .stat:last-child .tri { margin-left: 5px; }
</style>
